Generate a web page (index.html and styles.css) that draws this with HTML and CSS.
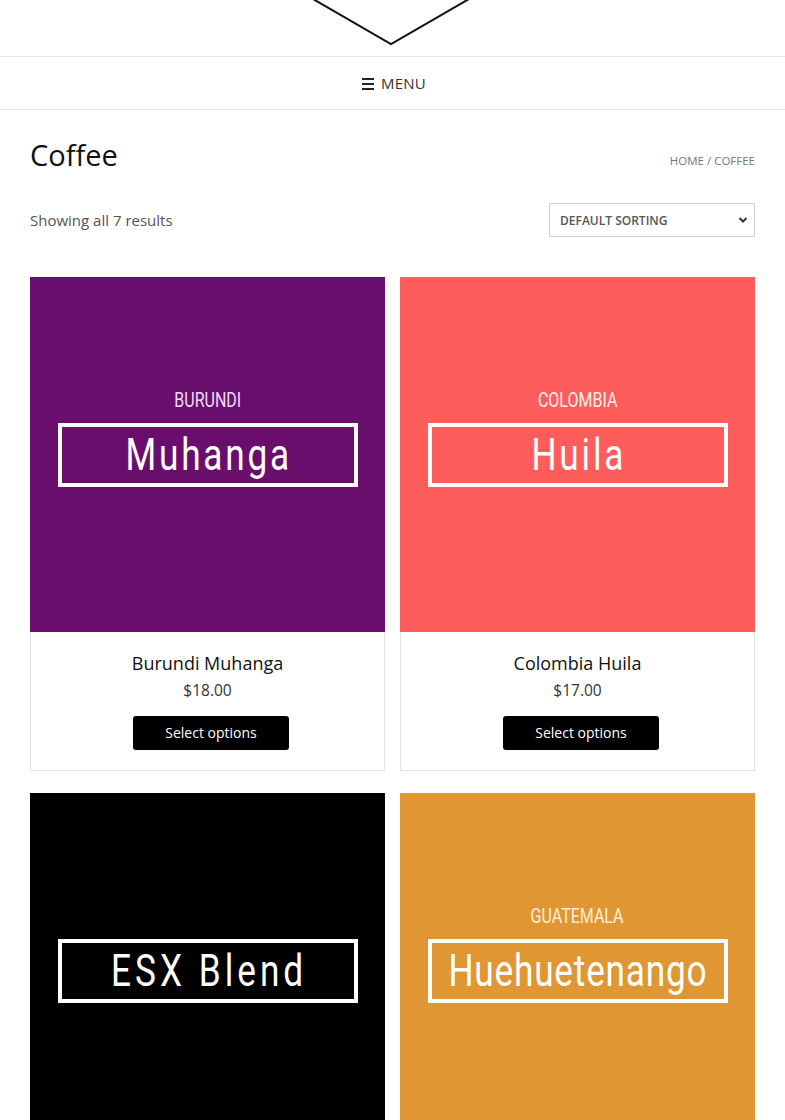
FILE: index.html
```html
<!DOCTYPE html>
<html lang="en">
<head>
<meta charset="utf-8">
<title>Coffee</title>
<link rel="stylesheet" href="styles.css">
</head>
<body>
<header class="site-header">
  <svg class="logo" width="160" height="46" viewBox="0 0 160 46">
    <polyline points="1,-1 79,44 157,-1" fill="none" stroke="#111" stroke-width="2"/>
  </svg>
</header>
<nav class="nav">
  <span class="burger"><i></i><i></i><i></i></span>
  <span class="menu-label">MENU</span>
</nav>
<main class="main">
  <div class="title-row">
    <h1 class="page-title">Coffee</h1>
    <div class="crumbs">HOME / COFFEE</div>
  </div>
  <div class="toolbar">
    <p class="count">Showing all 7 results</p>
    <div class="sort">
      <span>DEFAULT SORTING</span>
      <svg width="10" height="8" viewBox="0 0 10 8"><polyline points="1.5,2 5,5.5 8.5,2" fill="none" stroke="#333" stroke-width="2"/></svg>
    </div>
  </div>
  <ul class="grid">
    <li class="card">
      <div class="thumb purple">
        <span class="origin"><span class="sq">BURUNDI</span></span>
        <span class="box ls-4"><span class="sq">Muhanga</span></span>
      </div>
      <h2 class="name">Burundi Muhanga</h2>
      <p class="price">$18.00</p>
      <a class="btn">Select options</a>
    </li>
    <li class="card">
      <div class="thumb coral">
        <span class="origin"><span class="sq">COLOMBIA</span></span>
        <span class="box ls-4"><span class="sq">Huila</span></span>
      </div>
      <h2 class="name">Colombia Huila</h2>
      <p class="price">$17.00</p>
      <a class="btn">Select options</a>
    </li>
    <li class="card">
      <div class="thumb black">
        <span class="origin"></span>
        <span class="box ls-5"><span class="sq">ESX Blend</span></span>
      </div>
      <h2 class="name">ESX Blend</h2>
      <p class="price">$16.00</p>
      <a class="btn">Select options</a>
    </li>
    <li class="card">
      <div class="thumb orange">
        <span class="origin"><span class="sq">GUATEMALA</span></span>
        <span class="box"><span class="sq">Huehuetenango</span></span>
      </div>
      <h2 class="name">Guatemala Huehuetenango</h2>
      <p class="price">$17.00</p>
      <a class="btn">Select options</a>
    </li>
  </ul>
</main>
</body>
</html>
```
FILE: styles.css
```css
* { box-sizing: border-box; }
html, body { margin: 0; padding: 0; }
body {
  font-family: "Open Sans", "Liberation Sans", sans-serif;
  color: #111;
  background: #fff;
}
.site-header {
  height: 57px;
  border-bottom: 1px solid #e6e6e6;
  display: flex;
  justify-content: center;
  align-items: flex-start;
}
.logo { display: block; margin-left: -1px; }
.nav {
  height: 53px;
  border-bottom: 1px solid #e0e0e0;
  display: flex;
  align-items: center;
  justify-content: center;
  gap: 7px;
  padding-left: 3px;
}
.burger {
  display: flex;
  flex-direction: column;
  gap: 2.5px;
  width: 12px;
  margin-top: 2px;
}
.burger i {
  display: block;
  height: 2.5px;
  background: #222;
}
.menu-label {
  font-size: 15px;
  color: #333;
  letter-spacing: 0.2px;
}
.main {
  padding: 0 30px;
}
.title-row {
  display: flex;
  justify-content: space-between;
  align-items: center;
  padding-top: 2px;
  height: 90px;
}
.page-title {
  margin: 0;
  font-size: 29px;
  font-weight: 400;
  line-height: 40px;
  margin-top: -2px;
}
.crumbs {
  font-size: 11.5px;
  color: #777;
  margin-top: 8px;
}
.toolbar {
  display: flex;
  justify-content: space-between;
  align-items: center;
  margin-top: 3px;
}
.count {
  margin: 0;
  font-size: 15px;
  color: #555;
}
.sort {
  width: 206px;
  height: 34px;
  border: 1px solid #d2d2d2;
  display: flex;
  align-items: center;
  justify-content: space-between;
  padding: 0 6px 0 10px;
  font-size: 12px;
  font-weight: 600;
  color: #555;
}
.grid {
  list-style: none;
  margin: 40px 0 0;
  padding: 0;
  display: grid;
  grid-template-columns: 355px 355px;
  column-gap: 15px;
  row-gap: 22px;
}
.card {
  border: 1px solid #e2e2e2;
  text-align: center;
  padding-bottom: 20px;
}
.thumb {
  height: 355px;
  margin: -1px -1px 0;
  display: flex;
  flex-direction: column;
  align-items: center;
  padding-top: 113px;
  font-family: Roboto, "Liberation Sans", sans-serif;
}
.purple { background: #6a0e6e; color: #f3dcf3; }
.coral { background: #ff5d5b; color: #fff0ee; }
.black { background: #000; color: #f4f4f4; }
.orange { background: #e09733; color: #fcefdc; }
.sq {
  display: inline-block;
  transform: scaleX(0.8);
  white-space: nowrap;
}
.origin {
  display: block;
  height: 20px;
  line-height: 20px;
  font-size: 20px;
}
.box {
  display: flex;
  justify-content: center;
  margin-top: 13px;
  width: 300px;
  height: 64px;
  border: 4px solid #fff;
  color: #fff;
  font-size: 44px;
  font-weight: 400;
  line-height: 56px;
  letter-spacing: 1px;
}
.box.ls-4 { letter-spacing: 3.5px; text-indent: 4px; }
.box.ls-5 { letter-spacing: 5px; text-indent: 5px; }
.name {
  margin: 18px 0 0;
  font-size: 18px;
  font-weight: 400;
  line-height: 26px;
}
.price {
  margin: 3px 0 0;
  font-size: 15.5px;
  font-weight: 500;
  color: #333;
  line-height: 23px;
}
.btn {
  display: inline-block;
  margin-top: 14px;
  margin-left: 7px;
  width: 156px;
  height: 34px;
  line-height: 34px;
  background: #000;
  color: #fff;
  font-size: 14px;
  border-radius: 3px;
}
```
